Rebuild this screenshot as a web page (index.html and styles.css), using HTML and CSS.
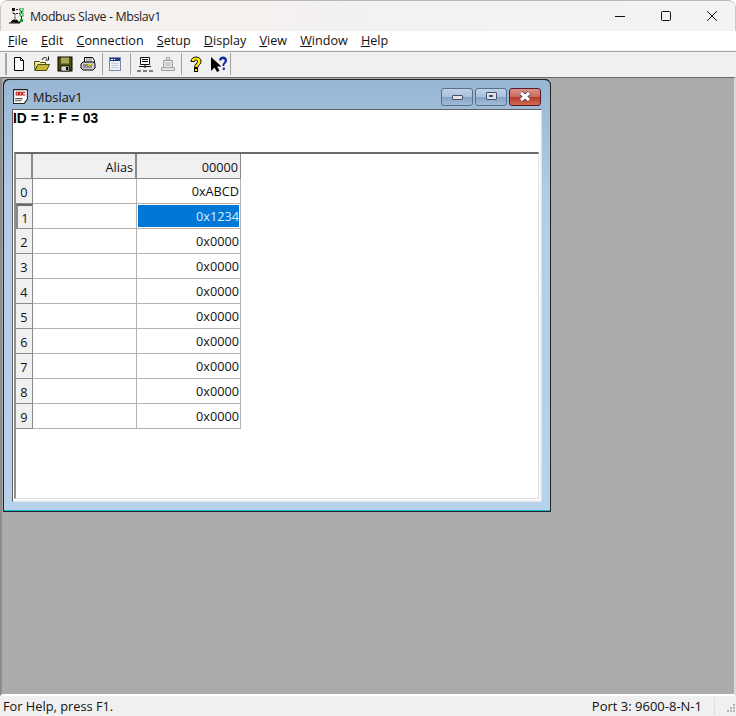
FILE: index.html
```html
<!DOCTYPE html>
<html lang="en">
<head>
<meta charset="utf-8">
<title>Modbus Slave - Mbslav1</title>
<link rel="stylesheet" href="styles.css">
</head>
<body>
<div class="app">
  <header class="titlebar">
    <svg class="app-icon" width="15" height="16" viewBox="0 0 15 16">
      <path d="M0 15h11v-1H2l2-2h4l1 2" fill="#111" stroke="#111" stroke-width="1"/>
      <path d="M4 1.500h7M4 5.500h7M4 1.500v4M6 10.500v-5" stroke="#222" stroke-width="1" fill="none" stroke-dasharray="2 1"/>
      <rect x="3" y="0" width="3" height="3" fill="#111"/>
      <rect x="11" y="0" width="3" height="3" fill="#fff" stroke="#1a9c3a"/>
      <rect x="11" y="5" width="3" height="3" fill="#fff" stroke="#1a9c3a"/>
      <rect x="11" y="11" width="3" height="3" fill="#1a9c3a"/>
      <path d="M12.500 3v2M12.500 8v3" stroke="#222"/>
    </svg>
    <span class="title-text">Modbus Slave - Mbslav1</span>
    <div class="caption-btns">
      <svg class="caption-btn" width="46" height="30" viewBox="0 0 46 30"><path d="M18 15.500h10" stroke="#111" stroke-width="1"/></svg>
      <svg class="caption-btn" width="46" height="30" viewBox="0 0 46 30"><rect x="18.500" y="10.500" width="9" height="9" rx="1" fill="none" stroke="#111" stroke-width="1"/></svg>
      <svg class="caption-btn" width="46" height="30" viewBox="0 0 46 30"><path d="M18 10l10 10M28 10L18 20" stroke="#111" stroke-width="1"/></svg>
    </div>
  </header>

  <nav class="menubar">
    <span class="menu-item"><u>F</u>ile</span>
    <span class="menu-item"><u>E</u>dit</span>
    <span class="menu-item"><u>C</u>onnection</span>
    <span class="menu-item"><u>S</u>etup</span>
    <span class="menu-item"><u>D</u>isplay</span>
    <span class="menu-item"><u>V</u>iew</span>
    <span class="menu-item"><u>W</u>indow</span>
    <span class="menu-item"><u>H</u>elp</span>
  </nav>

  <div class="toolbar">
    <span class="grip"></span>
    <svg class="tool" viewBox="0 0 16 16"><path d="M3.500 1.500h6l3 3v10h-9z" fill="#fff" stroke="#000"/><path d="M9.500 1.500v3h3" fill="none" stroke="#000"/></svg>
    <svg class="tool" viewBox="0 0 16 16"><path d="M0.500 5.500h5l1 1h5v2H4l-3 6z" fill="#f4ee9c" stroke="#4a4a10"/><path d="M1 14.500l3-6h11.500l-3 6z" fill="#c8b838" stroke="#4a4a10"/><path d="M8 4c1-3 3.500-3 5-1.500M14.500 0.500v3.500h-3" fill="none" stroke="#111"/></svg>
    <svg class="tool" viewBox="0 0 16 16"><rect x="1" y="1" width="14" height="14" fill="#4e4e0c" stroke="#000"/><rect x="4" y="1.500" width="8" height="6" fill="#a6a65a"/><rect x="4" y="10" width="8" height="5" fill="#dcdcdc" stroke="#000" stroke-width=".7"/><rect x="9" y="11" width="2" height="3" fill="#000"/></svg>
    <svg class="tool" viewBox="0 0 16 16"><path d="M4.500 1.500h8l2 3v2h-10z" fill="#fff" stroke="#000"/><path d="M6 3h6M6 5h6" stroke="#777"/><path d="M1 8l2-2h11l1 2v4l-2 2H3l-2-2z" fill="#ccc" stroke="#000"/><path d="M3 9h9M3 11h9" stroke="#555"/><rect x="8" y="8" width="3" height="1.500" fill="#e6d400"/></svg>
    <span class="tool-sep sep-a"></span>
    <svg class="tool" viewBox="0 0 16 16"><rect x="2.500" y="1.500" width="11" height="13" fill="#eef2f8" stroke="#7c8aa4"/><rect x="3" y="2" width="10" height="3" fill="#1f3c88"/><path d="M4 3.500h2M7 3.500h1" stroke="#fff"/><path d="M4.500 7.500h7M4.500 9.500h7M4.500 11.500h7" stroke="#c3cddb"/></svg>
    <span class="tool-sep sep-b"></span>
    <svg class="tool" viewBox="0 0 16 16"><path d="M3.500 1.500h9v7h-9z" fill="#fff" stroke="#111"/><path d="M5 3.500h6M5 5.500h6M2 10.500h12" stroke="#111"/><path d="M8 9v3" stroke="#111"/><path d="M0 15h4M6 15h4M12 15h4" stroke="#111" stroke-width="1"/></svg>
    <svg class="tool" viewBox="0 0 16 16"><path d="M6.500 1.500h3v3h-3z" fill="#ddd" stroke="#aaa"/><path d="M3.500 4.500h9v7h-9z" fill="#e8e8e8" stroke="#a0a0a0"/><path d="M5 7h6M5 9h6" stroke="#b4b4b4"/><path d="M1.500 11.500h13v3h-13z" fill="#e4e4e4" stroke="#a0a0a0"/></svg>
    <span class="tool-sep sep-c"></span>
    <svg class="tool" viewBox="0 0 16 16"><path d="M3 5.500c0-6 10-6 10 0 0 3-3 3.500-3.300 6H6.500c0-3.500 3-3.800 3-6 0-2-3-2-3 0z" fill="#ffec00" stroke="#000"/><rect x="6.500" y="12.500" width="3" height="3" fill="#ffec00" stroke="#000"/></svg>
    <svg class="tool" viewBox="0 0 16 16"><path d="M0 1v14l3.500-3.500L6 16l2.500-1.200L6 10.500h4.500z" fill="#000"/><path d="M8 4.500c0-5.500 8-5.500 8 0 0 2.500-2.500 2.800-2.800 5.500h-1.800c0-3.300 2.300-3.300 2.300-5.500 0-1.800-3.400-1.800-3.400 0zM11.800 11.500h2v2.500h-2z" fill="#102a9a"/></svg>
    <span class="tool-sep sep-d"></span>
  </div>

  <main class="mdi">
    <section class="child">
      <div class="child-title">
        <svg class="doc-icon" width="17" height="17" viewBox="0 0 16 16"><path d="M1.500 1.500h13v9l-3 4h-10z" fill="#fff" stroke="#222"/><path d="M3 3h10v5H3z" fill="#fdecec"/><path d="M4 4h2v2.500H4zM7 4h2v2.500H7zM10 4h2.500M10 6.500h2.500M10 4v2.500" fill="none" stroke="#c81e1e"/><path d="M3 10h7M3 12h6" stroke="#555"/></svg>
        <span class="child-name">Mbslav1</span>
        <div class="child-btns">
          <span class="cbtn"><i class="glyph-min"></i></span>
          <span class="cbtn"><i class="glyph-max"></i></span>
          <span class="cbtn cbtn-close"><svg width="16" height="11" viewBox="0 0 16 11"><path d="M4 2l8 7M12 2l-8 7" stroke="#3a3a55" stroke-width="4.500"/><path d="M4 2l8 7M12 2l-8 7" stroke="#fff" stroke-width="3"/></svg></span>
        </div>
      </div>
      <div class="client">
        <div class="id-line">ID = 1: F = 03</div>
        <div class="grid-well">
          <div class="grid">
            <div class="head corner"></div>
            <div class="head col alias">Alias</div>
            <div class="head col">00000</div>

            <div class="head rowh">0</div><div class="cell"></div><div class="cell val">0xABCD</div>
            <div class="head rowh rowh-cur">1</div><div class="cell"></div><div class="cell val sel"><span>0x1234</span></div>
            <div class="head rowh">2</div><div class="cell"></div><div class="cell val">0x0000</div>
            <div class="head rowh">3</div><div class="cell"></div><div class="cell val">0x0000</div>
            <div class="head rowh">4</div><div class="cell"></div><div class="cell val">0x0000</div>
            <div class="head rowh">5</div><div class="cell"></div><div class="cell val">0x0000</div>
            <div class="head rowh">6</div><div class="cell"></div><div class="cell val">0x0000</div>
            <div class="head rowh">7</div><div class="cell"></div><div class="cell val">0x0000</div>
            <div class="head rowh">8</div><div class="cell"></div><div class="cell val">0x0000</div>
            <div class="head rowh">9</div><div class="cell"></div><div class="cell val">0x0000</div>
          </div>
        </div>
      </div>
    </section>
  </main>

  <footer class="status">
    <span class="status-msg">For Help, press F1.</span>
    <span class="status-port">Port 3: 9600-8-N-1</span>
    <span class="status-div"></span>
    <svg class="sizer" width="10" height="10" viewBox="0 0 10 10" fill="#b4b4b4"><rect x="7" y="0" width="2" height="2"/><rect x="4" y="3" width="2" height="2"/><rect x="7" y="3" width="2" height="2"/><rect x="1" y="6" width="2" height="2"/><rect x="4" y="6" width="2" height="2"/><rect x="7" y="6" width="2" height="2"/></svg>
  </footer>
</div>
</body>
</html>
```

FILE: styles.css
```css
* { box-sizing: border-box; }
html, body { margin: 0; height: 100%; background: #fff; }
body { font-family: "Open Sans", "Noto Sans", sans-serif; font-size: 12.7px; color: #111; overflow: hidden; }

.app {
  width: 736px;
  height: 716px;
  display: flex;
  flex-direction: column;
  background: #f0f0f0;
  border-top: 1px solid #b8b8b8;
  border-radius: 8px 8px 0 0;
  overflow: hidden;
}

.titlebar {
  height: 30px;
  flex: none;
  display: flex;
  align-items: center;
  padding-left: 8px;
  background: linear-gradient(90deg, #f5f0ed, #f3f2f1 60%, #f3f3f3);
  border-left: 1px solid #c8c8c8;
  border-right: 1px solid #c8c8c8;
}
.app-icon { flex: none; margin-top: -1px; }
.title-text { margin-left: 6px; font-size: 12.4px; letter-spacing: -.36px; color: #222; }
.caption-btns { margin-left: auto; display: flex; }
.caption-btn { display: block; }

.menubar {
  height: 19px;
  flex: none;
  display: flex;
  align-items: center;
  gap: 13.150px;
  padding-left: 8px;
  background: #fff;
  font-size: 12.6px;
}
.menu-item { line-height: 19px; color: #111; }

.toolbar {
  height: 26px;
  flex: none;
  display: flex;
  align-items: center;
  padding: 0 0 2px 5px;
  background: #f0f0f0;
  border-top: 1px solid #a4a4a4;
  margin-top: 1px;
  box-shadow: 0 -1px 0 #f4f4f4;
}
.grip { width: 2px; height: 22px; background: #a8a8a8; flex: none; }
.tool { width: 16px; height: 16px; margin: 0 3.500px; flex: none; }
.tool-sep { width: 1px; height: 22px; background: #a0a0a0; flex: none; }
.sep-a { margin: 0 .5px 0 2.5px; }
.sep-b { margin: 0 2px 0 4px; }
.sep-c { margin: 0 2px 0 2px; }
.sep-d { margin-left: 0; }

.mdi {
  position: relative;
  flex: 1;
  background: #ababab;
  border-top: 1px solid #6a6a6a;
  border-left: 2px solid #8c8c8c;
  border-right: 2px solid #d8d8d8;
  border-bottom: 2px solid #fff;
}

.child {
  position: absolute;
  left: 1px;
  top: 1px;
  width: 548px;
  height: 433px;
  display: flex;
  flex-direction: column;
  border: 1px solid #101820;
  border-bottom: 2px solid #13b8d8;
  border-right: 1px solid #13b8d8;
  border-radius: 6px 6px 0 0;
  outline: 1px solid #222;
  outline-offset: -1px;
  padding: 0 8px 8px;
  background: linear-gradient(180deg, #98b6d4 0, #b4cde6 28%, #b8d1ec 100%);
}
.child-title {
  height: 29px;
  flex: none;
  display: flex;
  align-items: center;
  padding-top: 4px;
}
.doc-icon { flex: none; }
.child-name { margin-left: 4px; font-size: 12.8px; color: #111; }
.child-btns { margin-left: auto; display: flex; gap: 2px; margin-right: 1px; }
.cbtn {
  width: 32px;
  height: 18px;
  display: flex;
  align-items: center;
  justify-content: center;
  border: 1px solid #56708e;
  border-radius: 3px;
  background: linear-gradient(180deg, #bfd2e6 0, #a9c1dc 48%, #86a4c6 52%, #a3bcd8 100%);
}
.cbtn-close {
  border-color: #5a1a2a;
  background: linear-gradient(180deg, #d9948a 0, #c96a5c 48%, #b83a2a 52%, #d26a50 100%);
}
.glyph-min { display: block; width: 11px; height: 5px; margin-top: 2px; background: #e4e4ec; border: 1px solid #46506a; border-radius: 1px; }
.glyph-max { display: block; width: 11px; height: 8px; margin-top: -2px; background: linear-gradient(#46506a, #46506a) center / 4px 2px no-repeat, #dde4ee; border: 1px solid #46506a; border-radius: 1px; }

.client {
  flex: 1;
  min-height: 0;
  display: flex;
  flex-direction: column;
  background: #fff;
  border: 1px solid #e4e4e4;
  border-top-color: #606060;
  border-left-color: #606060;
  box-shadow: inset -1px -1px 0 #f4f4f4;
}
.id-line {
  height: 42px;
  flex: none;
  padding: 1px 0 0 0;
  font-family: "Liberation Sans", Arial, sans-serif;
  font-weight: bold;
  font-size: 13.800px;
  line-height: 16px;
  color: #000;
}
.grid-well {
  flex: 1;
  min-height: 0;
  margin: 0 2px 2px 1px;
  background: #fff;
  border: 1px solid #e0e0e0;
  border-top: 2px solid #6a6a6a;
  border-left: 2px solid #909090;
  padding: 0;
}
.grid {
  display: grid;
  grid-template-columns: 17px 104px 104px;
  grid-template-rows: repeat(11, 25px);
  width: max-content;
  font-size: 12.7px;
}
.head {
  background: #f0f0f0;
  display: flex;
  align-items: center;
  padding-top: 1px;
  border-right: 1px solid #8a8a8a;
  border-bottom: 1px solid #8a8a8a;
}
.corner { border-right-width: 2px; }
.col { justify-content: flex-end; padding-right: 2px; padding-top: 2px; }
.col.alias { border-right-width: 2px; }
.rowh { justify-content: center; }
.rowh-cur { border-top: 2px solid #6a6a6a; border-left: 2px solid #8a8a8a; }
.cell {
  background: #fff;
  display: flex;
  align-items: center;
  justify-content: flex-end;
  border-right: 1px solid #b4b4b4;
  border-bottom: 1px solid #b4b4b4;
}
.val { padding-right: 1px; }
.sel { padding: 1px; }
.sel span {
  flex: 1;
  align-self: stretch;
  display: flex;
  align-items: center;
  justify-content: flex-end;
  padding-right: 0;
  background: #0078d7;
  color: #dfeefa;
}

.status {
  position: relative;
  height: 20px;
  flex: none;
  display: flex;
  align-items: center;
  background: #f0f0f0;
  padding-left: 3px;
  font-size: 12.8px;
}
.status-port { margin-left: auto; margin-right: 12px; font-size: 13px; }
.status-div { width: 1px; height: 18px; background: #dcdcdc; margin-right: 21px; }
.sizer { position: absolute; right: 0; bottom: 2px; }
```
